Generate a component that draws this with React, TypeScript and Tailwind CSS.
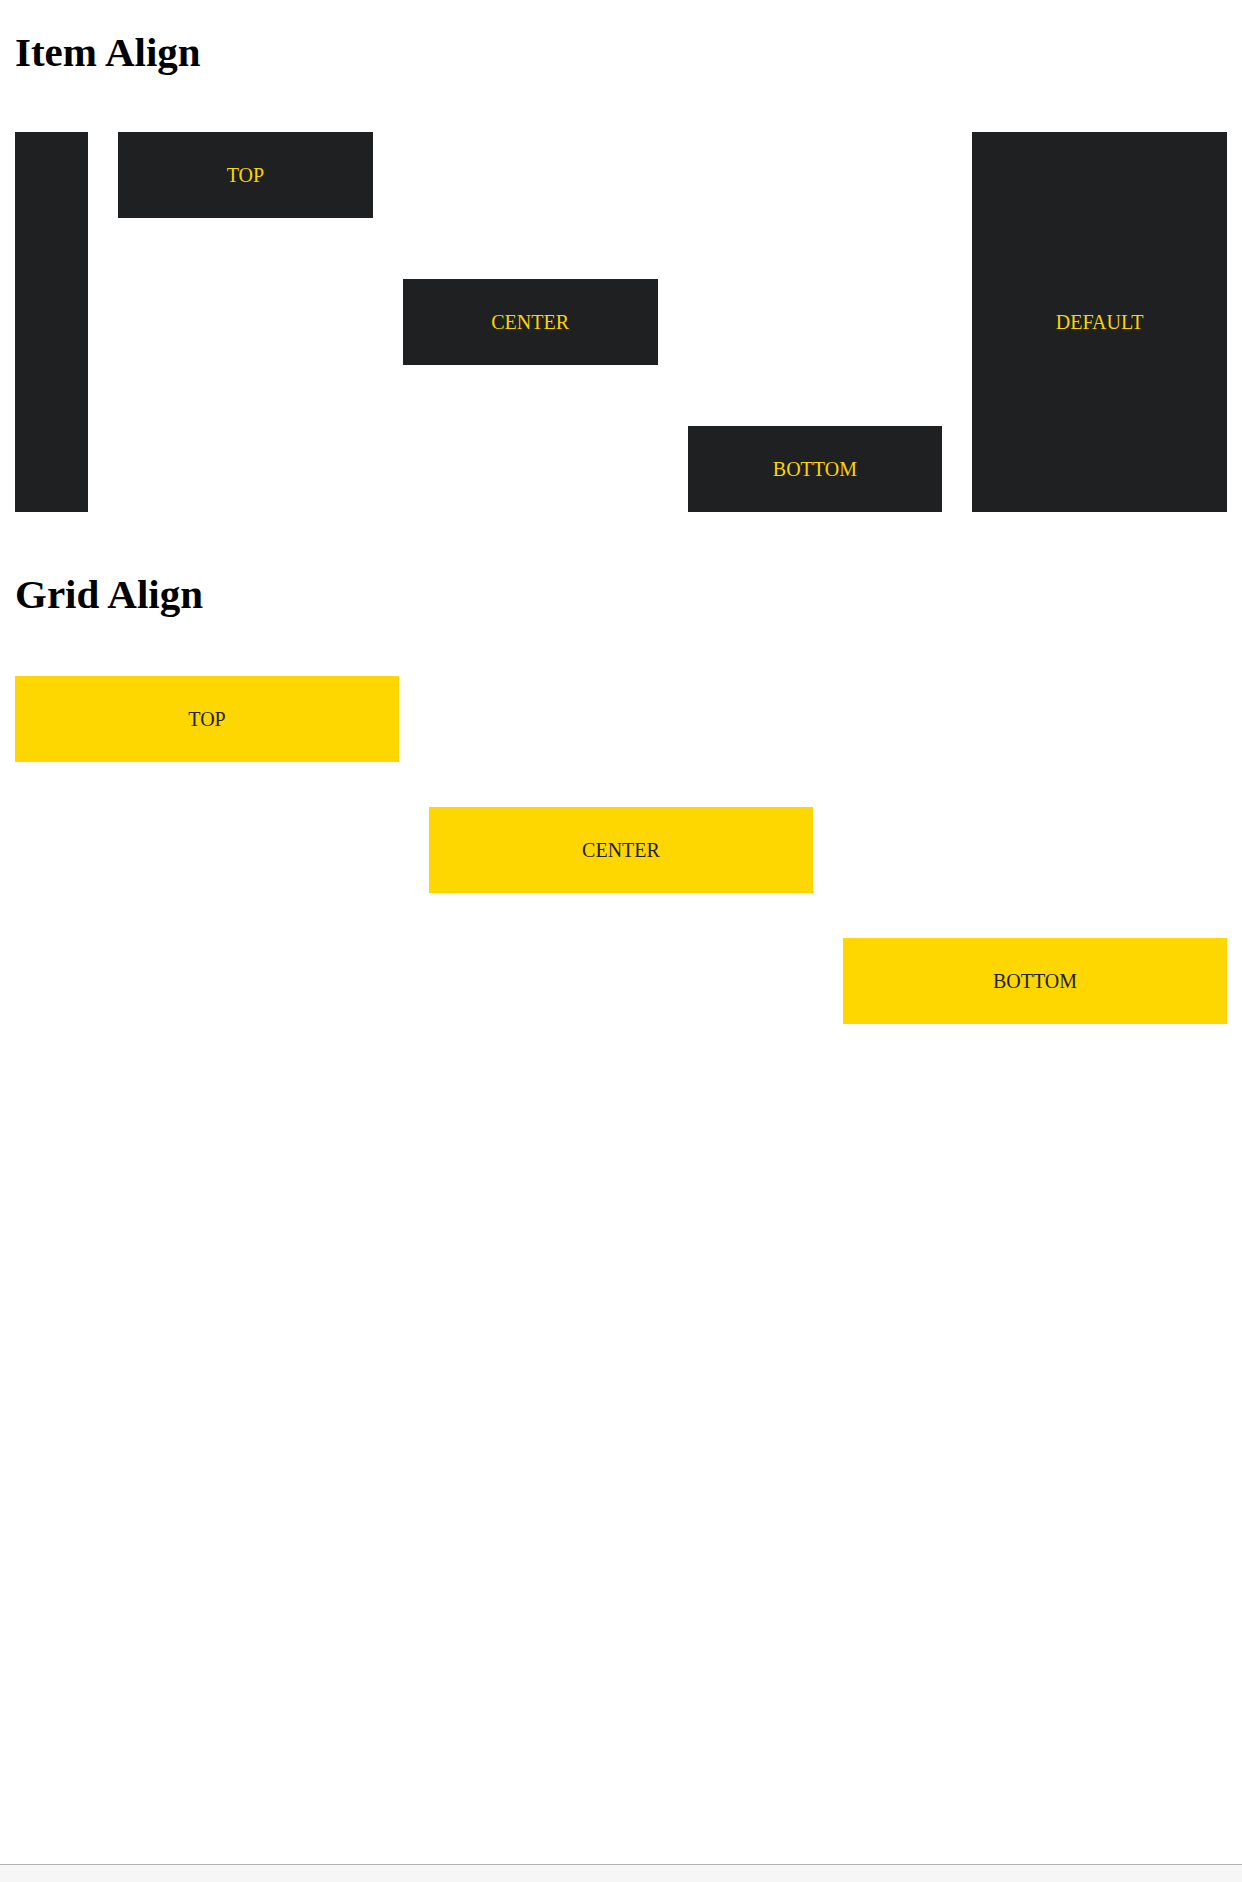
import React from "react";

const dark = "flex items-center justify-center bg-[#1f2022] text-[#fcd400]";
const gold = "flex h-[86px] items-center justify-center bg-[#ffd700] text-[#222]";

export default function App() {
  return (
    <div className="flex h-[1882px] flex-col bg-white font-['Liberation_Serif',serif] text-[20px]">
      <div className="px-[15px] pt-[28px]">
        <h1 className="h-[48px] text-[41px] font-bold leading-[48px] text-black">Item Align</h1>

        {/* item align: each box sets its own self-alignment */}
        <div className="mt-[56px] flex h-[380px] gap-[30px]">
          <div className="w-[73px] shrink-0 bg-[#1f2022]" />
          <div className={`${dark} h-[86px] flex-1 self-start`}>TOP</div>
          <div className={`${dark} h-[86px] flex-1 self-center`}>CENTER</div>
          <div className={`${dark} h-[86px] flex-1 self-end`}>BOTTOM</div>
          <div className={`${dark} flex-1`}>DEFAULT</div>
        </div>

        <h1 className="mt-[58px] h-[48px] text-[41px] font-bold leading-[48px] text-black">Grid Align</h1>

        <div className="mt-[58px] grid grid-cols-3 gap-x-[30px] gap-y-[45px]">
          <div className={`${gold} col-start-1 row-start-1`}>TOP</div>
          <div className={`${gold} col-start-2 row-start-2`}>CENTER</div>
          <div className={`${gold} col-start-3 row-start-3`}>BOTTOM</div>
        </div>
      </div>

      <div className="flex-1" />
      <div className="h-[18px] border-t border-[#b0b0b0] bg-[#f6f6f6]" />
    </div>
  );
}
